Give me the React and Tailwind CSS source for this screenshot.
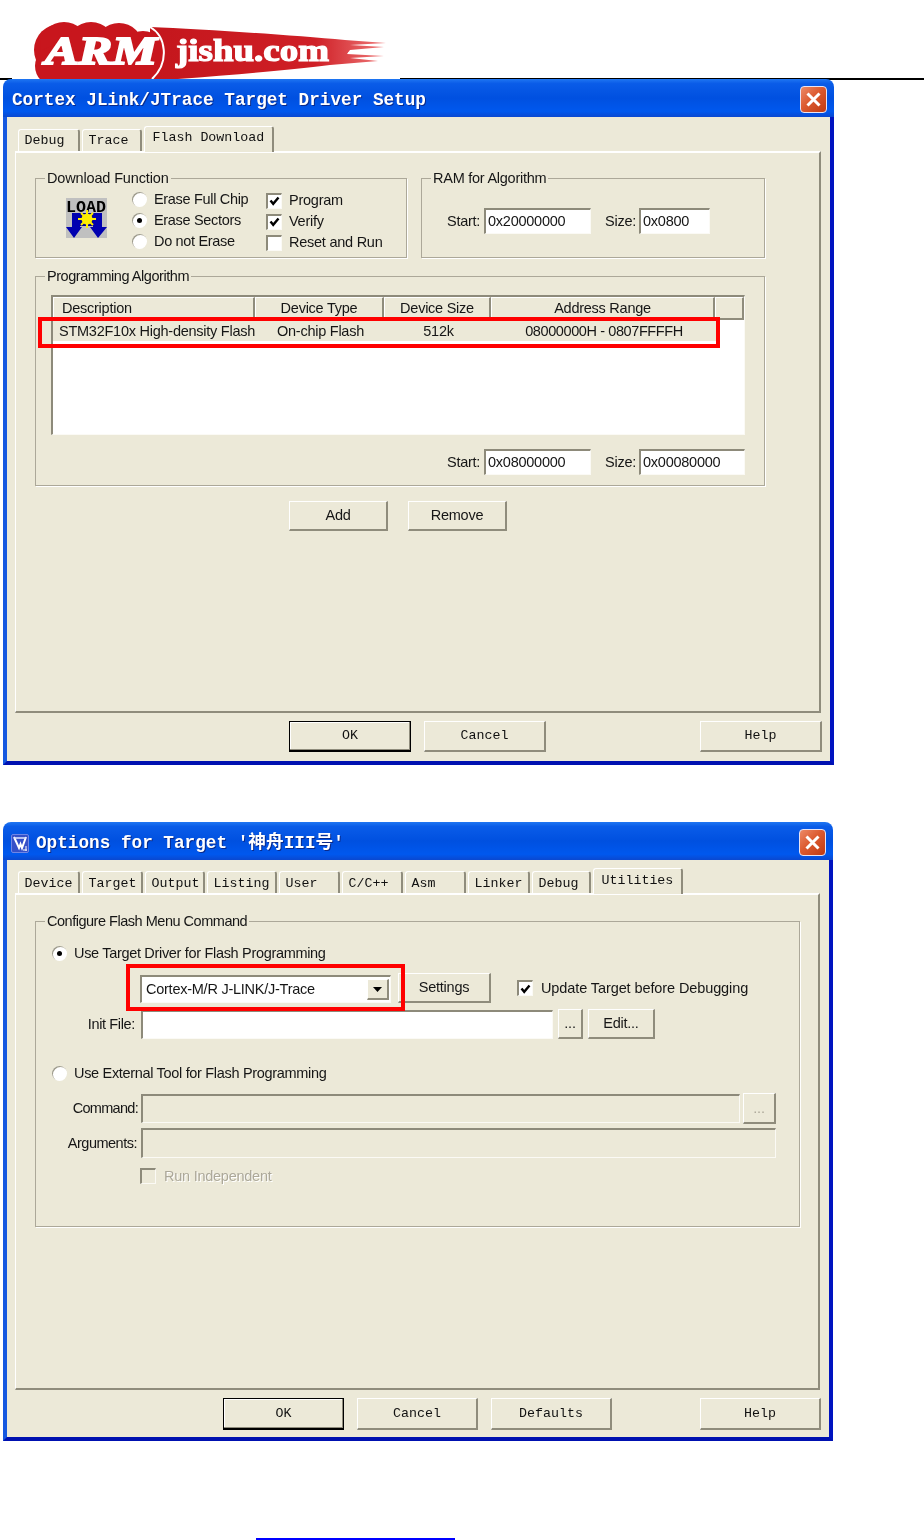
const UI = "font-['Liberation_Sans',Arial,sans-serif] text-[14.5px] tracking-[-0.25px] text-[#161616] leading-none whitespace-nowrap";
const MONO = "font-['Liberation_Mono','Noto_Sans_CJK_SC',monospace] text-[13.3px] text-[#111] leading-none whitespace-nowrap";
const SUNKEN = "border-t-2 border-l-2 border-t-[#8d8a7a] border-l-[#8d8a7a] border-r border-b border-r-[#fbfaf5] border-b-[#fbfaf5]";
const RAISED = "border-t border-l border-t-white border-l-white border-r-2 border-b-2 border-r-[#8f8c7c] border-b-[#8f8c7c]";
const TAB = "border-t border-l border-t-white border-l-white border-r-2 border-r-[#8f8c7c]";

function Logo() {
  return (
    <div className="ml-[12px] h-[80px] w-[388px] bg-white">
      <svg width="388" height="79" viewBox="12 0 388 79">
        <defs>
          <linearGradient id="tail" x1="0" x2="1" y1="0" y2="0">
            <stop offset="0" stopColor="#c4161c" />
            <stop offset="0.7" stopColor="#cf1f26" />
            <stop offset="1" stopColor="#ef7a7a" />
          </linearGradient>
        </defs>
        <path
          d="M150 27 C 200 29 290 35 345 40 L 386 43 L 350 45 L 384 47 L 350 50 L 347 54 L 384 56 L 350 58 L 378 61 L 330 65 C 290 70 230 75 165 80 L 150 80 Z"
          fill="url(#tail)"
        />
        <rect x="348" y="52" width="34" height="2" fill="#fff" opacity="0.8" />
        <g fill="#c8161d">
          <circle cx="60" cy="50" r="26" />
          <circle cx="64" cy="46" r="24" />
          <circle cx="91" cy="47" r="25" />
          <circle cx="119" cy="47" r="24" />
          <circle cx="143" cy="54" r="23" />
          <circle cx="55" cy="66" r="20" />
          <rect x="50" y="55" width="105" height="25" />
        </g>
        <path d="M150 27 C 166 36 170 62 152 79" fill="none" stroke="#fff" strokeWidth="2" />
        <text x="45" y="64" fontFamily="Liberation Serif" fontWeight="700" fontStyle="italic" fontSize="40" textLength="112" lengthAdjust="spacingAndGlyphs" fill="#fff" stroke="#fff" strokeWidth="2">ARM</text>
        <text x="176" y="61" fontFamily="Liberation Serif" fontWeight="700" fontSize="31" textLength="153" lengthAdjust="spacingAndGlyphs" fill="#fff" stroke="#fff" strokeWidth="1.2">jishu.com</text>
      </svg>
    </div>
  );
}

function CloseButton() {
  return (
    <span className="mt-[2px] flex h-[27px] w-[27px] items-center justify-center rounded-[4px] border border-[#e8e4f4] bg-[linear-gradient(135deg,#ec8a68_0%,#dc5a30_45%,#bf3a12_100%)]">
      <svg width="17" height="17" viewBox="0 0 17 17">
        <path d="M2.5 2.5 14.5 14.5 M14.5 2.5 2.5 14.5" stroke="#fff" strokeWidth="3" />
      </svg>
    </span>
  );
}

function TargetIcon() {
  return (
    <svg width="18" height="19" viewBox="0 0 18 19" className="mt-[4px] shrink-0">
      <rect x="0.5" y="0.5" width="17" height="18" rx="1.5" fill="#3550c8" stroke="#6f86e6" />
      <path d="M3 3 L8 14 L9.5 10 L11 14 L15 3" fill="none" stroke="#fff" strokeWidth="2" />
      <path d="M3 4 H15" stroke="#dfe6ff" strokeWidth="1.5" />
      <path d="M12 16 H16 M15 12 V17" stroke="#fff" strokeWidth="1" />
    </svg>
  );
}

function Dialog({ title, icon, children, width }) {
  return (
    <div className={`overflow-hidden rounded-t-[8px] ${width}`}>
      <div className="flex h-[38px] items-center bg-[linear-gradient(180deg,#1f76f2_0%,#0a5ce8_12%,#0050e0_50%,#0058ee_85%,#0a48d0_100%)] pl-[8px] pr-[7px]">
        {icon}
        <span className={`mt-[5px] font-['Liberation_Mono','Noto_Sans_CJK_SC',monospace] text-[17.7px] font-bold leading-none whitespace-nowrap text-white [text-shadow:1px_1px_0_#0a2a8a] ${icon ? "ml-[7px]" : "ml-[1px]"}`}>
          {title}
        </span>
        <span className="ml-auto">
          <CloseButton />
        </span>
      </div>
      <div className="border-x-4 border-b-4 border-l-[#1558e0] border-r-[#0013c0] border-b-[#0011b0] bg-[#ece9d8]">
        {children}
      </div>
    </div>
  );
}

function Tabs({ items, inactivePad = "pt-[5px]", activePad = "pt-[5px]" }) {
  return (
    <div className="ml-[11px] flex h-[25px] items-end">
      {items.map((t) => (
        <div
          key={t.label}
          className={`${t.w} ${t.active ? `relative z-10 -mb-px h-[26px] pl-[7.5px] ${activePad}` : `mr-[2px] h-[22px] pl-[5.5px] ${inactivePad}`} ${TAB} rounded-t-[3px] bg-[#ece9d8] ${MONO}`}
        >
          {t.label}
        </div>
      ))}
    </div>
  );
}

function Group({ legend, legendClass = "", className, children }) {
  return (
    <div className={`relative border border-[#aca899] shadow-[1px_1px_0_#fff] ${className}`}>
      <span className={`absolute -top-[8px] left-[9px] bg-[#ece9d8] px-[2px] ${UI} ${legendClass}`}>{legend}</span>
      {children}
    </div>
  );
}

function Radio({ checked, label }) {
  return (
    <div className="flex items-center">
      <span className="flex h-[15px] w-[15px] shrink-0 items-center justify-center rounded-full bg-white shadow-[inset_1px_1px_0_#9d9a8a]">
        {checked && <span className="h-[5px] w-[5px] rounded-full bg-black" />}
      </span>
      <span className={`ml-[7px] ${UI} tracking-[-0.32px]!`}>{label}</span>
    </div>
  );
}

function Check({ checked, disabled, label, labelClass = "" }) {
  return (
    <div className="flex items-center">
      <span className={`flex h-[16px] w-[16px] shrink-0 items-center justify-center ${SUNKEN} ${disabled ? "bg-[#ece9d8]" : "bg-white"}`}>
        {checked && (
          <svg width="11" height="10" viewBox="0 0 11 10">
            <path d="M1.5 4.5 4.2 7.8 9.5 1.5" fill="none" stroke="#000" strokeWidth="2.4" />
          </svg>
        )}
      </span>
      <span className={`ml-[7px] ${UI} ${labelClass}`}>{label}</span>
    </div>
  );
}

function Input({ value, className, disabled }) {
  return (
    <div className={`flex items-center pl-[2px] ${SUNKEN} ${disabled ? "bg-[#ece9d8]" : "bg-white"} ${UI} ${className}`}>
      {value}
    </div>
  );
}

function Btn({ label, className, mono, isDefault, disabled }) {
  const face = isDefault
    ? "border border-black border-b-2 shadow-[inset_-1px_-1px_0_#8f8c7c,inset_1px_1px_0_#fff]"
    : RAISED;
  return (
    <div className={`flex shrink-0 items-center justify-center bg-[#ece9d8] ${face} ${mono ? MONO : UI} ${disabled ? "text-[#aca899]!" : ""} ${className}`}>
      {label}
    </div>
  );
}

function LoadIcon() {
  return (
    <svg width="41" height="40" viewBox="0 0 41 40" className="shrink-0">
      <rect width="41" height="40" fill="#c0c0c0" />
      <text x="0" y="14" fontFamily="Liberation Mono" fontWeight="700" fontSize="16" textLength="40" lengthAdjust="spacingAndGlyphs" fill="#000">LOAD</text>
      <rect x="6" y="15" width="30" height="13" fill="#000090" />
      <path d="M6 15 H14 V29 H16 L8 40 L0 29 H6 Z" fill="#0000b0" />
      <path d="M27 15 H36 V29 H41 L32 40 L24 29 H27 Z" fill="#0000b0" />
      <g stroke="#ffee00" strokeWidth="2">
        <path d="M21 12 V30 M12 21 H30 M15 15 L27 27 M27 15 L15 27" />
      </g>
      <circle cx="21" cy="21" r="5.5" fill="#ffee00" />
    </svg>
  );
}

function Header({ label, className }) {
  return (
    <div className={`flex h-[23px] items-center ${RAISED} bg-[#ece9d8] ${UI} ${className}`}>
      {label}
    </div>
  );
}

function AddressFields({ start, size, sizeWidth }) {
  return (
    <div className={`flex items-center ${UI}`}>
      <span className="w-[37px]">Start:</span>
      <Input value={start} className="h-[26px] w-[107px]" />
      <span className="ml-[14px] w-[34px]">Size:</span>
      <Input value={size} className={`h-[26px] ${sizeWidth}`} />
    </div>
  );
}

function FlashDialog() {
  return (
    <Dialog title="Cortex JLink/JTrace Target Driver Setup" width="w-[831px]">
      <div className="pt-[9px]">
        <Tabs
          inactivePad="pt-[4px]"
          activePad="pt-[4px]"
          items={[
            { label: "Debug", w: "w-[62px]" },
            { label: "Trace", w: "w-[60px]" },
            { label: "Flash Download", w: "w-[130px]", active: true },
          ]}
        />
        <div className={`ml-[8px] mr-[9px] h-[562px] ${RAISED} border-t-2 pl-[19px] pt-[25px]`}>
          <div className="flex">
            <Group legend="Download Function" legendClass="tracking-[-0.15px]!" className="flex h-[80px] w-[372px] pl-[30px]">
              <div className="mt-[19px]">
                <LoadIcon />
              </div>
              <div className="ml-[25px] mt-[10px] flex w-[134px] flex-col">
                {[
                  ["Erase Full Chip", false],
                  ["Erase Sectors", true],
                  ["Do not Erase", false],
                ].map(([l, c]) => (
                  <div key={l} className="flex h-[21px] items-center">
                    <Radio label={l} checked={c} />
                  </div>
                ))}
              </div>
              <div className="mt-[11px] flex flex-col">
                {[
                  ["Program", true],
                  ["Verify", true],
                  ["Reset and Run", false],
                ].map(([l, c]) => (
                  <div key={l} className="flex h-[21px] items-center">
                    <Check label={l} checked={c} />
                  </div>
                ))}
              </div>
            </Group>
            <Group legend="RAM for Algorithm" className="ml-[14px] h-[80px] w-[344px] pl-[25px] pt-[29px]">
              <AddressFields start="0x20000000" size="0x0800" sizeWidth="w-[71px]" />
            </Group>
          </div>

          <Group legend="Programming Algorithm" legendClass="tracking-[-0.45px]!" className="mt-[18px] h-[210px] w-[730px] pl-[15px] pt-[18px]">
            <div className={`relative h-[140px] w-[694px] ${SUNKEN} bg-white`}>
              <div className="flex">
                <Header label="Description" className="w-[202px] pl-[8px]" />
                <Header label="Device Type" className="w-[129px] justify-center" />
                <Header label="Device Size" className="w-[107px] justify-center" />
                <Header label="Address Range" className="w-[224px] justify-center" />
                <Header label="" className="w-[29px]" />
              </div>
              <div className={`mt-px flex h-[20px] w-[663px] items-center bg-[#ece9d8] ${UI}`}>
                <span className="w-[202px] pl-[6px]">STM32F10x High-density Flash</span>
                <span className="w-[131px] text-center">On-chip Flash</span>
                <span className="w-[105px] text-center">512k</span>
                <span className="w-[224px] pl-[2px] text-center tracking-[-0.4px]!">08000000H - 0807FFFFH</span>
              </div>
              <div className="absolute -left-[15px] top-[20px] h-[31px] w-[682px] border-4 border-[#ff0000]" />
            </div>
            <div className="ml-[396px] mt-[14px]">
              <AddressFields start="0x08000000" size="0x00080000" sizeWidth="w-[106px]" />
            </div>
          </Group>

          <div className="ml-[254px] mt-[15px] flex gap-[20px]">
            <Btn label="Add" className="h-[30px] w-[99px]" />
            <Btn label="Remove" className="h-[30px] w-[99px]" />
          </div>
        </div>
        <div className="flex pb-[9px] pl-[282px] pr-[8px] pt-[8px]">
          <Btn label="OK" mono isDefault className="h-[31px] w-[122px]" />
          <Btn label="Cancel" mono className="ml-[13px] h-[31px] w-[122px]" />
          <Btn label="Help" mono className="ml-auto h-[31px] w-[122px]" />
        </div>
      </div>
    </Dialog>
  );
}

function ComboBox() {
  return (
    <div className={`relative flex h-[28px] w-[251px] items-center justify-between pl-[4px] pr-[1px] ${SUNKEN} bg-white ${UI}`}>
      Cortex-M/R J-LINK/J-Trace
      <span className={`flex h-[21px] w-[22px] items-center justify-center bg-[#ece9d8] ${RAISED}`}>
        <svg width="9" height="5" viewBox="0 0 9 5">
          <path d="M0 0H9L4.5 5Z" fill="#000" />
        </svg>
      </span>
      <div className="absolute -left-[16px] -top-[13px] h-[47px] w-[279px] border-4 border-[#ff0000]" />
    </div>
  );
}

function UtilitiesDialog() {
  return (
    <Dialog
      title="Options for Target '神舟III号'"
      icon={<TargetIcon />}
      width="w-[830px]"
    >
      <div className="pt-[8px]">
        <Tabs
          items={[
            { label: "Device", w: "w-[62px]" },
            { label: "Target", w: "w-[61px]" },
            { label: "Output", w: "w-[60px]" },
            { label: "Listing", w: "w-[70px]" },
            { label: "User", w: "w-[61px]" },
            { label: "C/C++", w: "w-[61px]" },
            { label: "Asm", w: "w-[61px]" },
            { label: "Linker", w: "w-[62px]" },
            { label: "Debug", w: "w-[59px]" },
            { label: "Utilities", w: "w-[90px]", active: true },
          ]}
        />
        <div className={`ml-[8px] mr-[9px] h-[497px] ${RAISED} border-t-2 pl-[19px] pt-[26px]`}>
          <Group legend="Configure Flash Menu Command" legendClass="tracking-[-0.48px]!" className="h-[306px] w-[765px] pl-[16px] pt-[24px]">
            <Radio label="Use Target Driver for Flash Programming" checked />

            <div className="ml-[88px] mt-[12px] flex h-[30px] items-center">
              <div className="mt-[2px]">
                <ComboBox />
              </div>
              <Btn label="Settings" className="ml-[7px] h-[30px] w-[93px]" />
              <div className="ml-[26px]">
                <Check label="Update Target before Debugging" checked labelClass="ml-[8px]! tracking-[-0.1px]!" />
              </div>
            </div>

            <div className={`mt-[6px] flex h-[30px] items-center ${UI}`}>
              <span className="w-[83px] text-right tracking-[-0.35px]!">Init File:</span>
              <Input className="ml-[6px] h-[29px] w-[412px]" value="" />
              <Btn label="..." className="ml-[5px] h-[30px] w-[25px]" />
              <Btn label="Edit..." className="ml-[5px] h-[30px] w-[67px]" />
            </div>

            <div className="mt-[27px]">
              <Radio label="Use External Tool for Flash Programming" />
            </div>

            <div className={`mt-[12px] flex h-[31px] items-center ${UI}`}>
              <span className="w-[86px] text-right tracking-[-0.7px]!">Command:</span>
              <Input className="ml-[3px] h-[29px] w-[599px]" disabled value="" />
              <Btn label="..." disabled className="ml-[3px] h-[31px] w-[33px]" />
            </div>

            <div className={`mt-[4px] flex h-[30px] items-center ${UI}`}>
              <span className="w-[85px] text-right tracking-[-0.5px]!">Arguments:</span>
              <Input className="ml-[4px] h-[30px] w-[635px]" disabled value="" />
            </div>

            <div className="ml-[88px] mt-[10px]">
              <Check label="Run Independent" disabled labelClass="ml-[8px]! text-[#aca899]! [text-shadow:1px_1px_0_#fff]" />
            </div>
          </Group>
        </div>
        <div className="flex pb-[7px] pl-[216px] pr-[8px] pt-[8px]">
          <Btn label="OK" mono isDefault className="h-[32px] w-[121px]" />
          <Btn label="Cancel" mono className="ml-[13px] h-[32px] w-[121px]" />
          <Btn label="Defaults" mono className="ml-[13px] h-[32px] w-[121px]" />
          <Btn label="Help" mono className="ml-auto h-[32px] w-[121px]" />
        </div>
      </div>
    </Dialog>
  );
}

export default function App() {
  return (
    <div className="h-[1540px] w-[924px] overflow-hidden bg-white blur-[0.35px]">
      <div className="h-[80px] border-b-2 border-black">
        <Logo />
      </div>
      <div className="relative z-10 -mt-px ml-[3px]">
        <FlashDialog />
      </div>
      <div className="ml-[3px] mt-[57px]">
        <UtilitiesDialog />
      </div>
      <div className="ml-[256px] mt-[97px] h-[2px] w-[199px] bg-[#0000ff]" />
    </div>
  );
}
